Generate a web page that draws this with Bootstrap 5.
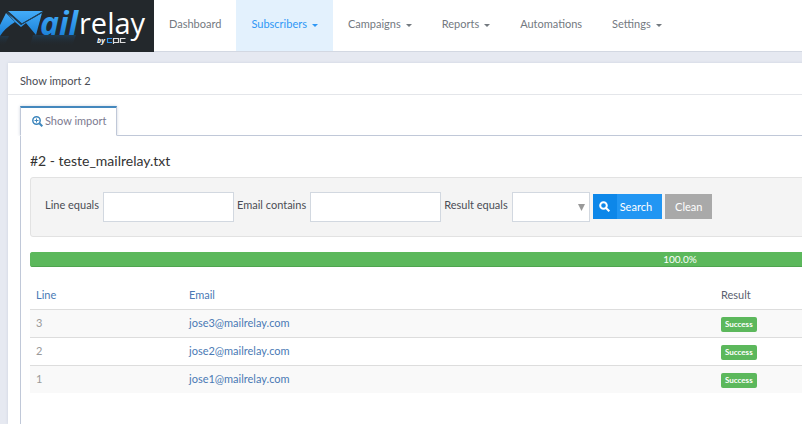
<!DOCTYPE html>
<html lang="en">
<head>
<meta charset="utf-8">
<meta name="viewport" content="width=device-width, initial-scale=1">
<title>Show import - Mailrelay</title>
<link href="https://cdn.jsdelivr.net/npm/bootstrap@5.3.0/dist/css/bootstrap.min.css" rel="stylesheet">
<style>
  html { overflow: hidden; }
  body { min-width: 1360px; min-height: 100vh; background: #e6e9f1; color: #4a4d55; font: 11px/18px Lato, "Open Sans", sans-serif; }
  a { text-decoration: none; color: #4a7ab5; }
  .topbar { background: #fff; border-bottom: 1px solid #d3d8e2; }
  .brand { background: #23282c; width: 154px; height: 52px; margin-bottom: -1px; }
  .topbar .nav-link { display: flex; align-items: center; padding: 0 15px 3px; height: 51px; color: #73797f; }
  .topbar .nav-link.active { background: #e3f1fd; color: #2e97f5; }
  .dropdown-toggle::after { margin-left: 5px; margin-top: 3px; border-width: 3px; border-bottom: 0; }
  .panel { margin: 11px 8px 0; background: #fff; min-height: calc(100vh - 63px); box-shadow: 0 0 3px #cdd3df; }
  .panel-title { height: 32px; padding: 9px 12px 0; border-bottom: 1px solid #e4e6ea; }
  .panel .nav-tabs { border-bottom: 1px solid #c0c8d8; }
  .panel .nav-tabs .nav-link { border: 1px solid #c0c8d8; border-top: 2px solid #4488bd; border-bottom-color: #fff; border-radius: 0; padding: 4px 10px 5px 11px; color: #7c7a90; box-shadow: 0 0 3px #cfd5e0; clip-path: inset(-4px -4px 0 -4px); }
  .tabs-area { padding: 11px 12px 0; }
  .pane { border-left: 1px solid #c0c8d8; border-right: 1px solid #c0c8d8; padding: 15px 9px 0; min-height: calc(100vh - 136px); }
  .pane h1 { font-size: 14px; font-weight: 400; line-height: 20px; margin: 0 0 6px; color: #333; }
  .filters { background: #f4f4f4; border: 1px solid #e2e2e2; border-radius: 3px; padding: 14px; gap: 3px; }
  .filters label { margin-right: 1px; padding-bottom: 4px; }
  .filters .field { border: 1px solid #d2d8e0; border-radius: 0; height: 30px; width: 131px; background: #fff; }
  .filters .pick { width: 78px; appearance: none; }
  .arrow { position: absolute; right: 5px; top: 12px; width: 7px; height: 7px; fill: #999; pointer-events: none; }
  .filters .btn { border: 0; border-radius: 0; color: #fff; font-size: 11px; line-height: 25px; padding: 0 10px; margin-bottom: 1px; }
  .filters .go { background: #2196f3; padding: 0 10px 0 0; gap: 3px; }
  .go .glyph { background: #0d87e9; width: 24px; }
  .filters .wipe { background: #a9a9a9; }
  .done { height: 15px; border-radius: 3px; background: #5cb85c; font-size: 10px; margin: 15px 0; }
  .done .progress-bar { background: #5cb85c; box-shadow: inset 0 -1px 0 #4fa44f; line-height: 14px; padding-bottom: 1px; }
  .rows { font-size: 11px; table-layout: fixed; }
  .rows th, .rows td { padding: 4px 6px 5px; font-weight: 400; color: #999; }
  .rows th { color: #5a5f70; }
  .rows tr { border-bottom: 1px solid #ddd; }
  .rows tbody tr:last-child { border-bottom: 0; }
  .rows tbody tr:nth-child(odd) { background: #f9f9f9; }
  .ok { background: #5cb85c; border-radius: 2px; font-size: 8px; line-height: 9px; padding: 3px 4px; }
</style>
</head>
<body>
<header class="topbar d-flex">
  <a class="brand" href="#" aria-label="Mailrelay">
    <svg width="154" height="52" viewBox="0 0 154 52">
      <defs>
        <linearGradient id="blue" gradientUnits="userSpaceOnUse" x1="0" y1="10" x2="0" y2="36"><stop offset="0" stop-color="#45aefa"/><stop offset="1" stop-color="#1a80d8"/></linearGradient>
        <linearGradient id="glow" gradientUnits="userSpaceOnUse" x1="0" y1="34" x2="0" y2="46"><stop offset="0" stop-color="#1a5c94" stop-opacity=".4"/><stop offset="1" stop-color="#23282c" stop-opacity="0"/></linearGradient>
      </defs>
      <path d="M0 36H9L4 46H0ZM33 35H76L72 46H30Z" fill="url(#glow)"/>
      <path d="M6 13L15 22Q5 28 0 36V25Z" fill="url(#blue)"/>
      <path d="M8 11H43L22 23.500Z" fill="url(#blue)"/>
      <path d="M7 12.500L21 25L42 13L36 35Q31 29 26 23L21 27L15 22Z" fill="url(#blue)"/>
      <path d="M7 12L21.500 24L43 12" fill="none" stroke="#1d435f"/>
      <text x="40" y="35" font-family="Open Sans" font-size="32" font-weight="700" font-style="italic" fill="url(#blue)">ail</text>
      <text x="79" y="34" font-family="Open Sans" font-size="29" fill="#fff">relay</text>
      <text x="97" y="43" font-family="Open Sans" font-size="7" font-weight="700" font-style="italic" fill="#fff">by</text>
      <g fill="none" stroke-width="1.200"><path d="M112 38.500H107.500V42.500H112" stroke="#2e97f5"/><path d="M113.500 44V38.500H118.500V42.500H113.500M125.500 38.500H120.500V42.500H125.500" stroke="#ddd"/></g>
    </svg>
  </a>
  <nav class="nav" aria-label="Main">
    <a class="nav-link" href="#">Dashboard</a>
    <a class="nav-link active dropdown-toggle" href="#">Subscribers</a>
    <a class="nav-link dropdown-toggle" href="#">Campaigns</a>
    <a class="nav-link dropdown-toggle" href="#">Reports</a>
    <a class="nav-link" href="#">Automations</a>
    <a class="nav-link dropdown-toggle" href="#">Settings</a>
  </nav>
</header>
<main class="panel">
  <div class="panel-title">Show import 2</div>
  <div class="tabs-area">
    <ul class="nav nav-tabs">
      <li class="nav-item"><a class="nav-link active d-flex align-items-center" href="#"><svg width="13" height="11" viewBox="0 0 13 11" fill="none" stroke="#3f87bd"><circle cx="4.500" cy="4.500" r="3.700" stroke-width="1.500"/><path d="M2.500 4.500H6.500M4.500 2.500V6.500"/><path d="M7.300 7.300L10.300 10.300" stroke-width="2"/></svg>Show import</a></li>
    </ul>
    <section class="pane">
      <h1>#2 - teste_mailrelay.txt</h1>
      <form class="filters d-flex align-items-center">
        <label for="line">Line equals</label>
        <input class="field" id="line" type="text">
        <label for="email">Email contains</label>
        <input class="field" id="email" type="text">
        <label for="result">Result equals</label>
        <span class="position-relative d-flex"><select class="field pick" id="result"><option></option></select><svg class="arrow" viewBox="0 0 7 7"><path d="M0 0H7L3.500 7Z"/></svg></span>
        <button class="btn go d-flex" type="button"><span class="glyph d-flex align-items-center justify-content-center"><svg width="11" height="11" viewBox="0 0 11 11" fill="none" stroke="#fff" stroke-width="2"><circle cx="4.500" cy="4.500" r="3.300"/><path d="M7 7L10.300 10.300"/></svg></span><span>Search</span></button>
        <button class="btn wipe" type="button">Clean</button>
      </form>
      <div class="progress done" role="progressbar" aria-label="Import progress" aria-valuenow="100" aria-valuemin="0" aria-valuemax="100"><div class="progress-bar w-100">100.0%</div></div>
      <table class="rows w-100">
        <colgroup><col style="width:11.77%"><col style="width:40.92%"><col></colgroup>
        <thead><tr><th><a href="#">Line</a></th><th><a href="#">Email</a></th><th>Result</th></tr></thead>
        <tbody>
          <tr><td>3</td><td><a href="#">jose3@mailrelay.com</a></td><td><span class="badge ok">Success</span></td></tr>
          <tr><td>2</td><td><a href="#">jose2@mailrelay.com</a></td><td><span class="badge ok">Success</span></td></tr>
          <tr><td>1</td><td><a href="#">jose1@mailrelay.com</a></td><td><span class="badge ok">Success</span></td></tr>
        </tbody>
      </table>
    </section>
  </div>
</main>
<script src="https://cdn.jsdelivr.net/npm/bootstrap@5.3.0/dist/js/bootstrap.bundle.min.js"></script>
</body>
</html>
